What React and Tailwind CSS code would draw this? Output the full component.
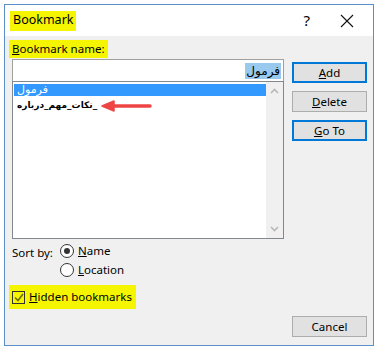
import React from "react";

const F = { fontFamily: '"Noto Sans", "DejaVu Sans", sans-serif' };
const AR = { fontFamily: '"DejaVu Sans", sans-serif' };

function Btn({ children, focus }) {
  return (
    <div
      className={
        "w-[75px] h-[21px] flex items-center justify-center text-[11.5px] text-black bg-[#e1e1e1] " +
        (focus ? "border-2 border-[#0078d7]" : "border border-[#adadad]")
      }
    >
      {children}
    </div>
  );
}

export default function App() {
  return (
    <div className="w-[380px] h-[350px] bg-white pt-[4px] pl-[4px]" style={F}>
      <div className="w-[370px] h-[342px] border border-[#5b8fc7] flex flex-col bg-[#f0f0f0]">
        {/* title bar */}
        <div className="h-[31px] bg-white flex items-center pl-[5px] pr-[10px] shrink-0">
          <span className="bg-[#f5f500] px-[3px] h-[20px] flex items-center text-[12.5px] text-black">Bookmark</span>
          <span className="ml-auto mr-[30px] text-[15px] text-black">?</span>
          <svg width="14" height="14" viewBox="0 0 14 14" className="mr-[9px]">
            <path d="M1 1 L13 13 M13 1 L1 13" stroke="#111" strokeWidth="1.1" />
          </svg>
        </div>
        {/* body */}
        <div className="flex-1 flex flex-col pl-[4px] pr-[5px] pt-[4px]">
          <div className="flex">
            <div className="w-[280px] flex flex-col">
              <span className="self-start bg-[#f5f500] px-[3px] h-[18px] flex items-center text-[11.5px] text-black">
                <span className="underline">B</span>ookmark name:
              </span>
              <div className="ml-[3px] mt-[1px] w-[272px] h-[22px] bg-white border border-[#a0a0a0] border-b-0 flex items-center justify-end pr-[2px]">
                <span dir="rtl" className="bg-[#99c9ef] text-black text-[12px] leading-[16px] px-[1px]" style={AR}>
                  فرمول
                </span>
              </div>
              <div className="ml-[3px] w-[272px] h-[158px] bg-white border border-[#828790] flex">
                <div className="flex-1 pt-[2px] pl-[1px]">
                  <div className="h-[12px] bg-[#3399ff] text-white text-[11px] leading-[12px] pl-[3px] flex items-center">
                    <span dir="rtl" style={AR}>فرمول</span>
                  </div>
                  <div className="h-[14px] flex items-center mt-[3px] pl-[3px]">
                    <span dir="rtl" className="text-black text-[9px] font-bold" style={AR}>
                      _نکات_مهم_درباره
                    </span>
                    <svg width="52" height="12" viewBox="0 0 52 12" className="ml-[4px]">
                      <path d="M10 6 L49 6" stroke="#ef4444" strokeWidth="3.5" strokeLinecap="round" />
                      <path d="M1 6 L13 1 L13 11 Z" fill="#ef4444" stroke="#ef4444" strokeWidth="1.5" strokeLinejoin="round" />
                    </svg>
                  </div>
                </div>
                <div className="w-[17px] bg-[#f0f0f0] flex flex-col items-center justify-between py-[6px]">
                  <svg width="9" height="6" viewBox="0 0 9 6"><path d="M1 5 L4.5 1.5 L8 5" stroke="#b8b8b8" strokeWidth="1.6" fill="none" /></svg>
                  <svg width="9" height="6" viewBox="0 0 9 6"><path d="M1 1 L4.5 4.5 L8 1" stroke="#b8b8b8" strokeWidth="1.6" fill="none" /></svg>
                </div>
              </div>
            </div>
            <div className="ml-auto mt-[22px] flex flex-col gap-[8px] mr-[1px]">
              <Btn focus><span><span className="underline">A</span>dd</span></Btn>
              <Btn><span><span className="underline">D</span>elete</span></Btn>
              <Btn focus><span><span className="underline">G</span>o To</span></Btn>
            </div>
          </div>
          {/* sort by */}
          <div className="flex mt-[4px] ml-[3px] text-[11.5px] text-black">
            <span className="w-[48px] mt-[1px]">Sort by:</span>
            <div className="flex flex-col gap-[4px]">
              <div className="flex items-center h-[15px]">
                <span className="w-[14px] h-[14px] rounded-full border border-[#333] bg-white flex items-center justify-center">
                  <span className="w-[6px] h-[6px] rounded-full bg-[#333]" />
                </span>
                <span className="ml-[4px]"><span className="underline">N</span>ame</span>
              </div>
              <div className="flex items-center h-[15px]">
                <span className="w-[14px] h-[14px] rounded-full border border-[#333] bg-white" />
                <span className="ml-[4px]"><span className="underline">L</span>ocation</span>
              </div>
            </div>
          </div>
          {/* hidden bookmarks */}
          <div className="self-start mt-[8px] bg-[#f5f500] h-[24px] flex items-center pl-[3px] pr-[4px] text-[11.5px] text-black">
            <span className="w-[13px] h-[13px] border border-[#333] flex items-center justify-center">
              <svg width="10" height="9" viewBox="0 0 10 9"><path d="M1 4.5 L4 7.5 L9 1" stroke="#6b6b00" strokeWidth="1.6" fill="none" /></svg>
            </span>
            <span className="ml-[4px]"><span className="underline">H</span>idden bookmarks</span>
          </div>
          <div className="flex justify-end mt-[7px] mr-[1px]">
            <Btn>Cancel</Btn>
          </div>
        </div>
      </div>
    </div>
  );
}
